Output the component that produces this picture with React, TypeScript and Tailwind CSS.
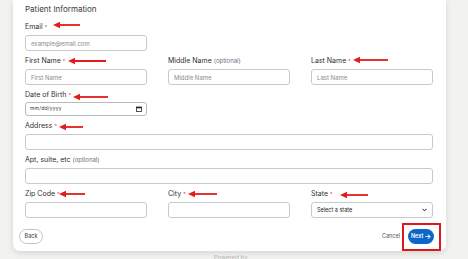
import React from "react";

function Req() {
  return <span className="ml-[2px] text-[5px] text-red-500 align-top">*</span>;
}

function Label({ text, required, optional, className = "" }: { text: string; required?: boolean; optional?: boolean; className?: string }) {
  return (
    <div className={`h-[10px] leading-[10px] text-[7px] text-[#2f2f2f] mb-[3px] whitespace-nowrap ${className}`}>
      {text}
      {optional && <span className="ml-[2px] text-[6px] text-gray-500">(optional)</span>}
      {required && <Req />}
    </div>
  );
}

function TextBox({ placeholder = "", h = "h-[16px]" }: { placeholder?: string; h?: string }) {
  return (
    <input
      readOnly
      placeholder={placeholder}
      className={`block w-full ${h} rounded-[3px] border border-[#c9c9c9] bg-white px-[5px] text-[6px] text-gray-700 placeholder:text-[#8a8a8a] outline-none`}
    />
  );
}

// red annotation arrow, head on the left
function Arrow({ x1, x2, y }: { x1: number; x2: number; y: number }) {
  return (
    <svg
      className="absolute pointer-events-none"
      style={{ left: x1, top: y - 4, width: x2 - x1, height: 8 }}
      viewBox={`0 0 ${x2 - x1} 8`}
    >
      <line x1={5} y1={4} x2={x2 - x1} y2={4} stroke="#e21b1b" strokeWidth={1.8} />
      <polygon points="0,4 7,0.8 7,7.2" fill="#e21b1b" />
    </svg>
  );
}

export default function App() {
  return (
    <div className="relative w-[468px] h-[259px] overflow-hidden bg-[#f2f2ee]" style={{ fontFamily: "Inter, 'Liberation Sans', sans-serif" }}>
      <div className="ml-[13px] w-[433px] bg-white rounded-b-[7px] shadow-[0_2px_6px_rgba(0,0,0,0.12)] pl-[12px] pr-[13px] pt-[4px] pb-[7px]">
        <div className="h-[10px] leading-[10px] text-[8px] text-[#3a3a3a] mb-[8px]">Patient Information</div>

        <div className="w-[122px] mb-[5px]">
          <Label text="Email" required />
          <TextBox placeholder="example@email.com" />
        </div>

        <div className="grid grid-cols-3 gap-x-[21px] mb-[5px]">
          <div>
            <Label text="First Name" required />
            <TextBox placeholder="First Name" />
          </div>
          <div>
            <Label text="Middle Name" optional />
            <TextBox placeholder="Middle Name" />
          </div>
          <div>
            <Label text="Last Name" required />
            <TextBox placeholder="Last Name" />
          </div>
        </div>

        <div className="w-[122px] mb-[5px]">
          <Label text="Date of Birth" required className="!mb-[2px]" />
          <div className="flex items-center justify-between h-[14px] rounded-[3px] border border-[#b9b9b9] px-[4px]">
            <span className="text-[5px] text-[#333] tracking-[0.2px]">mm/dd/yyyy</span>
            <svg width="6" height="6" viewBox="0 0 6 6">
              <rect x="0.5" y="1" width="5" height="4.5" fill="none" stroke="#222" strokeWidth="0.8" />
              <rect x="0.5" y="1" width="5" height="1.3" fill="#222" />
            </svg>
          </div>
        </div>

        <div className="mb-[5px]">
          <Label text="Address" required />
          <TextBox />
        </div>

        <div className="mb-[5px]">
          <Label text="Apt, suite, etc" optional />
          <TextBox />
        </div>

        <div className="grid grid-cols-3 gap-x-[21px]">
          <div>
            <Label text="Zip Code" required />
            <TextBox />
          </div>
          <div>
            <Label text="City" required />
            <TextBox />
          </div>
          <div>
            <Label text="State" required />
            <div className="flex items-center justify-between h-[16px] rounded-[3px] border border-[#c9c9c9] px-[5px]">
              <span className="text-[5.5px] text-[#222]">Select a state</span>
              <svg width="5" height="4" viewBox="0 0 5 4">
                <path d="M0.6 0.8 L2.5 2.9 L4.4 0.8" fill="none" stroke="#222" strokeWidth="1" />
              </svg>
            </div>
          </div>
        </div>

        <div className="flex items-center justify-between mt-[11px] -ml-[6px] -mr-[1px]">
          <button className="h-[15px] w-[24px] rounded-full border border-[#c4c4c4] text-[5.5px] text-[#333] bg-white">Back</button>
          <div className="flex items-center gap-[8px]">
            <span className="text-[5.5px] text-[#555]">Cancel</span>
            <button className="h-[15px] w-[26px] rounded-full bg-[#0a66c8] text-white text-[5.5px] font-semibold flex items-center justify-center gap-[1px]">
              Next <span className="text-[7px] leading-none">→</span>
            </button>
          </div>
        </div>
      </div>

      <div className="absolute left-[214px] top-[253px] text-[6px] text-[#b5b5b5]">Powered by</div>

      {/* highlight box */}
      <div className="absolute left-[402px] top-[223px] w-[39px] h-[28px] border-2 border-[#e0161d]" />

      <Arrow x1={53} x2={80} y={25} />
      <Arrow x1={68} x2={106} y={61} />
      <Arrow x1={353} x2={388} y={60} />
      <Arrow x1={73} x2={108} y={97} />
      <Arrow x1={59} x2={83} y={127} />
      <Arrow x1={59} x2={85} y={194} />
      <Arrow x1={188} x2={217} y={194} />
      <Arrow x1={340} x2={368} y={195} />
    </div>
  );
}
